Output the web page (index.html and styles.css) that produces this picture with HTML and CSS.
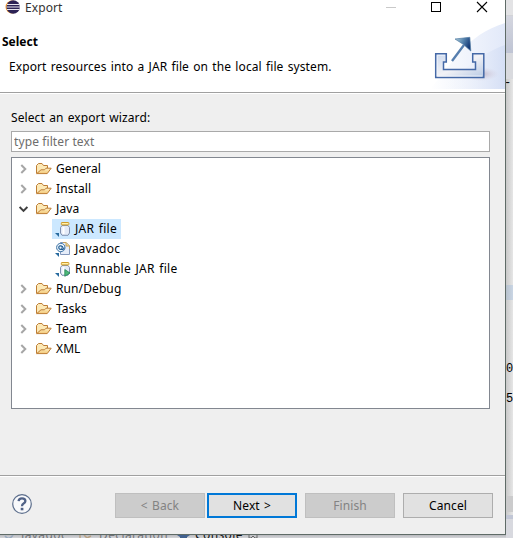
FILE: index.html
```html
<!DOCTYPE html>
<html lang="en">
  <head>
    <meta charset="UTF-8" />
    <meta name="viewport" content="width=device-width, initial-scale=1.0" />
    <title>Export</title>
    <link rel="stylesheet" href="styles.css" />
  </head>
  <body>
    <!-- shared icons -->
    <svg class="defs" width="0" height="0">
      <defs>
        <linearGradient id="folderFill" x1="0" y1="0" x2="0" y2="1">
          <stop offset="0" stop-color="#fff1c4" />
          <stop offset="1" stop-color="#f2c777" />
        </linearGradient>
        <linearGradient id="trayFill" x1="0" y1="0" x2="1" y2="1">
          <stop offset="0" stop-color="#ccd9ee" />
          <stop offset="0.5" stop-color="#f2f2f6" />
          <stop offset="1" stop-color="#b6c8e4" />
        </linearGradient>
        <linearGradient id="arrowFill" x1="0" y1="0" x2="1" y2="0.4">
          <stop offset="0" stop-color="#b5d2dc" />
          <stop offset="0.55" stop-color="#5583ad" />
          <stop offset="1" stop-color="#163b78" />
        </linearGradient>
        <linearGradient id="swoosh" x1="0" y1="0" x2="1" y2="0">
          <stop offset="0" stop-color="#ffffff" />
          <stop offset="1" stop-color="#e2e9f9" />
        </linearGradient>
        <linearGradient id="swooshLow" x1="0" y1="0" x2="1" y2="0">
          <stop offset="0" stop-color="#ffffff" stop-opacity="0" />
          <stop offset="1" stop-color="#d5dff5" />
        </linearGradient>
        <radialGradient id="trayShadow">
          <stop offset="0" stop-color="#bfb4c6" />
          <stop offset="1" stop-color="#d8d4e4" stop-opacity="0" />
        </radialGradient>
      </defs>
      <symbol id="closed" viewBox="0 0 9 10">
        <path d="M2.3 1 L6.3 5 L2.3 9" fill="none" stroke="#a6a6a6" stroke-width="2" />
      </symbol>
      <symbol id="open" viewBox="0 0 9 10">
        <path d="M0.6 3 L4.5 6.9 L8.4 3" fill="none" stroke="#404040" stroke-width="2" />
      </symbol>
      <symbol id="folder" viewBox="0 0 16 16">
        <path d="M0.5 12.5 V4.5 L2.5 2.5 H6 L7.5 4.5 H11.5 V7" fill="#fce9b6" stroke="#bd7d35" />
        <path d="M0.7 12.6 L5 8.8 H8.5 L10 7.2 H15.2 L11.2 12.6 Z" fill="url(#folderFill)" stroke="#bd7d35" stroke-linejoin="round" />
      </symbol>
      <symbol id="jar" viewBox="0 0 16 16">
        <path d="M7 4.5 L5.5 6.5 V12 L7 14.3 H13 L14.5 12 V6.5 L13 4.5 Z" fill="#e3eaf7" stroke="#8191af" />
        <path d="M8.5 6 V13" stroke="#fff" stroke-width="2" />
        <rect x="6.3" y="1.5" width="7.6" height="2.4" rx="0.6" fill="#fff0a9" stroke="#cf9b2b" />
        <path d="M0 12 H4 V16 Z" fill="#286b9f" />
      </symbol>
      <symbol id="javadoc" viewBox="0 0 16 16">
        <path d="M5.5 1.5 H11 L14.5 5 V13.5 H5.5 Z" fill="#e6edf9" stroke="#8498bc" />
        <path d="M8 1.5 H11 L14.5 5 V8" fill="none" stroke="#c4a260" />
        <path d="M11 1.5 V5 H14.5" fill="#f4d994" stroke="#c4a260" />
        <circle cx="5.8" cy="6.5" r="4.2" fill="#eef5fc" stroke="#3b72a4" />
        <path d="M7.5 4.8 L6.8 8.5 Q8.8 9 9 6.3 M7.2 5.8 A1.8 1.8 0 1 0 7 7.7" fill="none" stroke="#235f95" stroke-width="1.2" />
        <path d="M0 12 H4 V16 Z" fill="#286b9f" />
      </symbol>
      <symbol id="runjar" viewBox="0 0 16 16">
        <use href="#jar" width="16" height="16" />
        <path d="M9.8 8.5 L15 12 L9.8 15.3 Z" fill="#4db878" stroke="#258554" stroke-width="0.8" />
      </symbol>
    </svg>

    <div class="screen">
      <div class="dialog">
        <header class="banner">
          <div class="heading">
            <div class="titlebar">
              <svg class="logo" width="16" height="14" viewBox="0 0 16 14">
                <circle cx="7" cy="7" r="6.5" fill="#f59b2d" />
                <circle cx="8.2" cy="7" r="6.7" fill="#2c2255" />
                <path d="M2 4.5 H14.5 M1.5 7 H15 M2 9.5 H14.5" stroke="#e8e6ef" stroke-width="1.1" />
              </svg>
              <span>Export</span>
            </div>
            <h1>Select</h1>
            <p>Export resources into a JAR file on the local file system.</p>
          </div>
          <svg class="art" width="85" height="92" viewBox="0 0 85 92">
            <path d="M10 89 C34 62 46 35 85 23 V89 Z" fill="url(#swoosh)" />
            <path d="M14 89 C40 76 58 54 85 45 V89 Z" fill="url(#swooshLow)" />
            <ellipse cx="61" cy="74" rx="18" ry="7" fill="url(#trayShadow)" />
            <path d="M15.7 53.7 H26.3 V62 H23.5 V69.5 H55.5 V62 H52.7 V53.7 H63.8 V77.5 H15.7 Z" fill="url(#trayFill)" stroke="#4569a7" stroke-width="1.5" />
            <path d="M17.3 55.3 H25 M17.3 55.3 V76 H62" fill="none" stroke="#f0f4fb" stroke-width="0.8" />
            <path d="M32 61 L44 45" stroke="#567eae" stroke-width="2.4" />
            <path d="M35 39 L49.8 37.3 L50.8 51 L43.5 44.5 Z" fill="url(#arrowFill)" stroke="#527ba3" stroke-width="0.7" />
          </svg>
          <svg class="controls" width="102" height="14" viewBox="0 0 102 14">
            <path d="M0 7.5 H10" stroke="#c9c9c9" />
            <rect x="45.5" y="2.5" width="9" height="9" fill="none" stroke="#000" />
            <path d="M91 2 L101 12 M101 2 L91 12" stroke="#000" stroke-width="1.1" />
          </svg>
        </header>

        <main class="content">
          <label for="filter">Select an export wizard:</label>
          <input id="filter" type="text" placeholder="type filter text" />
          <ul class="tree">
            <li><svg class="arrow"><use href="#closed" /></svg><svg class="icon"><use href="#folder" /></svg><span>General</span></li>
            <li><svg class="arrow"><use href="#closed" /></svg><svg class="icon"><use href="#folder" /></svg><span>Install</span></li>
            <li><svg class="arrow"><use href="#open" /></svg><svg class="icon"><use href="#folder" /></svg><span>Java</span></li>
            <li class="child selected"><svg class="icon"><use href="#jar" /></svg><span>JAR file</span></li>
            <li class="child"><svg class="icon"><use href="#javadoc" /></svg><span>Javadoc</span></li>
            <li class="child"><svg class="icon"><use href="#runjar" /></svg><span>Runnable JAR file</span></li>
            <li><svg class="arrow"><use href="#closed" /></svg><svg class="icon"><use href="#folder" /></svg><span>Run/Debug</span></li>
            <li><svg class="arrow"><use href="#closed" /></svg><svg class="icon"><use href="#folder" /></svg><span>Tasks</span></li>
            <li><svg class="arrow"><use href="#closed" /></svg><svg class="icon"><use href="#folder" /></svg><span>Team</span></li>
            <li><svg class="arrow"><use href="#closed" /></svg><svg class="icon"><use href="#folder" /></svg><span>XML</span></li>
          </ul>
        </main>

        <footer class="buttons">
          <svg class="help" width="22" height="22" viewBox="0 0 22 22">
            <circle cx="11" cy="11" r="9.3" fill="#f8f9fb" stroke="#5c6e8c" stroke-width="1.2" />
            <path d="M7.6 8.2 Q7.8 5.3 11 5.3 Q14.4 5.3 14.4 8 Q14.4 9.6 12.6 10.6 Q11 11.5 11 13.2" fill="none" stroke="#506287" stroke-width="2.3" />
            <rect x="9.7" y="14.8" width="2.7" height="2.5" fill="#506287" />
          </svg>
          <button disabled>&lt; Back</button>
          <button class="default">Next &gt;</button>
          <button class="finish" disabled>Finish</button>
          <button class="cancel">Cancel</button>
        </footer>
      </div>

      <!-- editor window showing behind the dialog -->
      <aside class="editor">
        <div class="toolbar"></div>
        <div class="tabs"></div>
        <div class="ruler"></div>
        <div class="code mark">-</div>
        <div class="current"></div>
        <div class="code zero">0</div>
        <div class="code five">5</div>
        <div class="scroll"></div>
        <div class="sash"></div>
      </aside>
      <div class="views">
        <svg width="10" height="5" viewBox="0 0 10 5"><path d="M1 1 Q5 6 9 0" fill="none" stroke="#9aabc0" stroke-width="1.5" /></svg>
        <span class="view-javadoc">Javadoc</span>
        <svg width="14" height="5" viewBox="0 0 14 5"><path d="M1 0 V3 M5 0 L8 3 L12 1" fill="none" stroke="#b9a285" stroke-width="1.5" /></svg>
        <span class="view-declaration">Declaration</span>
        <svg width="13" height="5" viewBox="0 0 13 5"><path d="M0 0 H13 L10 2 V3 H3 V2 Z" fill="#41618f" /></svg>
        <span class="view-console">Console</span>
        <svg width="10" height="5" viewBox="0 0 10 5"><path d="M1 0 V3 H3 L5 1 L7 3 H9 V0" fill="none" stroke="#666" /></svg>
      </div>
    </div>
  </body>
</html>
```
FILE: styles.css
```css
* {
  box-sizing: border-box;
}
body {
  margin: 0;
  overflow: hidden;
  font-family: "Noto Sans", "Open Sans", sans-serif;
  font-size: 12px;
  line-height: 20px;
  letter-spacing: 0.1px;
  word-spacing: 1px;
  color: #000;
}
svg {
  display: block;
  flex: none;
}
.defs {
  position: absolute;
}
.screen {
  display: grid;
  grid-template-columns: 506px 7px;
  grid-template-rows: 535px 3px;
  width: 513px;
  height: 538px;
  overflow: hidden;
  background-color: #dcdde2;
}
.dialog {
  display: flex;
  flex-direction: column;
  background-color: #efefef;
  border-right: 1px solid #5f6b67;
  border-bottom: 1px solid #5f6b67;
}

/* title and banner */
.banner {
  position: relative;
  display: flex;
  justify-content: space-between;
  height: 93px;
  background-color: #fff;
  border-bottom: 1px solid #a0a0a0;
}
.heading {
  white-space: nowrap;
}
.titlebar {
  display: flex;
  gap: 4px;
  height: 17px;
  padding-left: 5px;
  line-height: 16px;
  color: #333;
}
.banner h1 {
  margin: 15px 0 0 2px;
  font-size: 12px;
  line-height: 20px;
  letter-spacing: 0;
}
.banner p {
  margin: 5px 0 0 9px;
}
.controls {
  position: absolute;
  top: 0;
  right: 17px;
}

/* wizard list */
.content {
  display: flex;
  flex-direction: column;
  flex: 1;
  padding: 14px 15px 66px 11px;
  border-top: 1px solid #fff;
}
.content label {
  height: 23px;
}
.content input {
  height: 21px;
  margin-bottom: 5px;
  padding: 0 2px 1px;
  font: inherit;
  letter-spacing: inherit;
  border: 1px solid #a9a9a9;
  background-color: #fff;
}
.content input::placeholder {
  color: #6d6d6d;
}
.tree {
  flex: 1;
  margin: 0;
  padding: 1px 7px;
  list-style: none;
  background-color: #fff;
  border: 1px solid #828790;
}
.tree li {
  display: flex;
  align-items: center;
  height: 20px;
  white-space: nowrap;
}
.arrow {
  width: 9px;
  height: 10px;
  margin-right: 8px;
}
.icon {
  width: 16px;
  height: 16px;
  margin-right: 4px;
}
.tree .child {
  width: max-content;
  margin-left: 33px;
  padding: 0 4px 0 3px;
  letter-spacing: 0.3px;
}
.tree .selected {
  background-color: #cce8ff;
}

/* button bar */
.buttons {
  display: flex;
  height: 59px;
  padding: 17px 12px 0 11px;
  border-top: 1px solid #a0a0a0;
  box-shadow: inset 0 1px #fff;
}
.help {
  margin-right: 82px;
}
.buttons button {
  width: 90px;
  height: 25px;
  margin-right: 2px;
  padding: 0;
  font: inherit;
  letter-spacing: inherit;
  word-spacing: inherit;
  color: #000;
  background-color: #e1e1e1;
  border: 1px solid #adadad;
}
.buttons button:disabled {
  color: #838383;
  background-color: #cccccc;
  border-color: #bfbfbf;
}
.buttons .default {
  border: 2px solid #0078d7;
}
.buttons .finish {
  margin-left: 6px;
  margin-right: 8px;
}
.buttons .cancel {
  margin-right: 0;
}

/* background window */
.editor {
  display: flex;
  flex-direction: column;
  grid-row: 1 / 3;
  grid-column: 2;
  overflow: hidden;
  background-image: linear-gradient(to right, #c9c9c9, #e6e6e6);
}
.editor div {
  flex: none;
}
.toolbar {
  height: 16px;
  background-color: #e3e3e5;
  border-bottom: 1px solid #d2d3d7;
}
.tabs {
  height: 37px;
  background-image: linear-gradient(#d4d6df, #bfc4d4);
}
.ruler {
  height: 26px;
  background-color: #d9dade;
}
.code {
  height: 15px;
  font-family: "Liberation Mono", monospace;
  font-size: 12px;
  line-height: 15px;
  letter-spacing: 0;
}
.mark {
  height: 206px;
  margin-left: -2px;
  line-height: 9px;
}
.current {
  height: 15px;
  background-image: linear-gradient(to right, #b7c1cc, #cad6e5);
}
.zero {
  margin-top: 62px;
}
.five {
  margin-top: 15px;
}
.scroll {
  height: 16px;
  margin-top: 89px;
  background-color: #cbcbcc;
}
.sash {
  height: 42px;
  margin-top: 3px;
  background-color: #d8d9df;
  border-top: 4px solid #c1c6d5;
}
.views {
  display: flex;
  height: 3px;
  padding-left: 4px;
  overflow: hidden;
  line-height: 3px;
  letter-spacing: 0.4px;
  white-space: nowrap;
  background-image: linear-gradient(#b8b9bd, #d5d6da);
  color: #747478;
}
.views span {
  height: 3px;
  line-height: 0;
}
.view-javadoc {
  width: 65px;
  padding-left: 7px;
}
.view-declaration {
  width: 84px;
  padding-left: 6px;
}
.view-console {
  width: 58px;
  padding-left: 5px;
}
.views .view-console {
  color: #111;
}
```
